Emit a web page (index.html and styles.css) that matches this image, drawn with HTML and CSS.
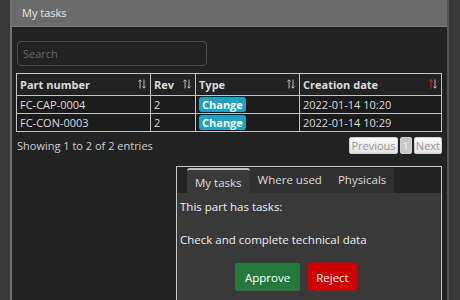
FILE: index.html
```html
<!DOCTYPE html>
<html lang="en">
  <head>
    <meta charset="UTF-8" />
    <title>My tasks</title>
    <link rel="stylesheet" href="styles.css">
  </head>
  <body>
    <div class="window">
      <div class="titlebar">My tasks</div>

      <div class="content">
        <input class="search" type="text" placeholder="Search" />

        <table class="grid">
          <thead>
            <tr>
              <th class="col-part">Part number <span class="sort"><svg width="8" height="10" viewBox="0 0 8 10"><path d="M2 9.5V1M0.5 2.5L2 0.8L3.5 2.5" stroke="#bbb" fill="none"/><path d="M6 0.5V9M4.5 7.5L6 9.2L7.5 7.5" stroke="#bbb" fill="none"/></svg></span></th>
              <th class="col-rev">Rev <span class="sort"><svg width="8" height="10" viewBox="0 0 8 10"><path d="M2 9.5V1M0.5 2.5L2 0.8L3.5 2.5" stroke="#bbb" fill="none"/><path d="M6 0.5V9M4.5 7.5L6 9.2L7.5 7.5" stroke="#bbb" fill="none"/></svg></span></th>
              <th class="col-type">Type <span class="sort"><svg width="8" height="10" viewBox="0 0 8 10"><path d="M2 9.5V1M0.5 2.5L2 0.8L3.5 2.5" stroke="#bbb" fill="none"/><path d="M6 0.5V9M4.5 7.5L6 9.2L7.5 7.5" stroke="#bbb" fill="none"/></svg></span></th>
              <th class="col-date">Creation date <span class="sort"><svg width="8" height="10" viewBox="0 0 8 10"><path d="M2 9.5V1M0.5 2.5L2 0.8L3.5 2.5" stroke="#c8161d" stroke-width="1.3" fill="none"/><path d="M6 0.5V9M4.5 7.5L6 9.2L7.5 7.5" stroke="#bbb" fill="none"/></svg></span></th>
            </tr>
          </thead>
          <tbody>
            <tr>
              <td>FC-CAP-0004</td>
              <td>2</td>
              <td><span class="badge">Change</span></td>
              <td>2022-01-14 10:20</td>
            </tr>
            <tr>
              <td>FC-CON-0003</td>
              <td>2</td>
              <td><span class="badge">Change</span></td>
              <td>2022-01-14 10:29</td>
            </tr>
          </tbody>
        </table>

        <div class="table-footer">
          <span>Showing 1 to 2 of 2 entries</span>
          <div class="pager">
            <span class="page-btn">Previous</span>
            <span class="page-btn current">1</span>
            <span class="page-btn">Next</span>
          </div>
        </div>

        <div class="detail">
          <div class="tabs">
            <div class="tab active">My tasks</div>
            <div class="tab">Where used</div>
            <div class="tab">Physicals</div>
          </div>
          <div class="tab-body">
            <p>This part has tasks:</p>
            <p>Check and complete technical data</p>
            <div class="actions">
              <button class="btn approve">Approve</button>
              <button class="btn reject">Reject</button>
            </div>
          </div>
        </div>
      </div>
    </div>
  </body>
</html>
```

FILE: styles.css
```css
body {
  margin: 0;
  background: #393939;
  font-family: "Open Sans", Arial, sans-serif;
  font-size: 11px;
  color: #dcdcdc;
  height: 300px;
  overflow: hidden;
}

.window {
  margin-left: 10px;
  width: 435px;
  height: 300px;
  background: #222;
  border-left: 2px solid #737373;
  border-right: 2px solid #555;
}

.titlebar {
  height: 26px;
  line-height: 26px;
  padding-left: 10px;
  background: #6b6b6b;
  border-bottom: 1px solid #7a7a7a;
  color: #e6e6e6;
  font-size: 11px;
}

.content {
  padding: 14px 3px 0 4px;
}

.search {
  display: block;
  margin-left: 1px;
  width: 190px;
  height: 25px;
  box-sizing: border-box;
  background: #222;
  border: 1px solid #4c4c4c;
  border-radius: 4px;
  padding: 0 5px;
  color: #ccc;
  font-family: inherit;
  font-size: 11px;
  outline: none;
}

.search::placeholder {
  color: #666;
}

.grid {
  margin-top: 7px;
  width: 426px;
  border-collapse: collapse;
  table-layout: fixed;
}

.grid th,
.grid td {
  border: 1px solid #c4c4c4;
  text-align: left;
  white-space: nowrap;
}

.grid th {
  height: 21px;
  padding: 0 4px 0 3px;
  font-weight: bold;
  color: #dcdcdc;
  background: #222;
}

.grid td {
  height: 17px;
  padding: 0 3px;
  background: #1b1b1b;
}

.col-part { width: 126px; }
.col-rev { width: 37px; }
.col-type { width: 96px; }

.sort {
  float: right;
  margin-top: 2px;
}

.sort svg {
  display: block;
}

.badge {
  display: inline-block;
  padding: 0 3px;
  line-height: 15px;
  border-radius: 3px;
  background: #1aa3c4;
  color: #fff;
  font-weight: bold;
}

.table-footer {
  display: flex;
  justify-content: space-between;
  align-items: center;
  width: 425px;
  margin-top: 5px;
  padding-left: 1px;
  color: #cfcfcf;
}

.pager {
  display: flex;
  gap: 2px;
}

.page-btn {
  padding: 0 1px;
  line-height: 15px;
  border: 1px solid #cfcfcf;
  border-radius: 2px;
  background: linear-gradient(#fafafa, #e2e2e2);
  color: #9a9a9a;
}

.page-btn.current {
  padding: 0 2px;
  background: #c8c8c8;
  color: #f2f2f2;
}

.detail {
  margin: 12px 0 0 160px;
  width: 264px;
  height: 140px;
  border: 1px solid #c8c8c8;
  border-bottom: none;
  background: #393939;
}

.tabs {
  display: flex;
  height: 26px;
  padding-left: 10px;
  background: #222;
  align-items: flex-end;
  font-size: 11.5px;
}

.tab {
  height: 25px;
  line-height: 24px;
  padding: 0 8px;
  background: #303030;
  color: #dcdcdc;
}

.tab.active {
  background: #393939;
  border-top: 2px solid #bdbdbd;
  border-radius: 3px 3px 0 0;
  height: 23px;
  line-height: 26px;
}

.tab-body {
  padding: 6px 3px;
  color: #eee;
  font-size: 11.5px;
}

.tab-body p {
  margin: 0 0 18px;
}

.actions {
  display: flex;
  gap: 8px;
  padding-left: 55px;
  margin-top: -2px;
}

.btn {
  height: 28px;
  padding: 0 10px;
  border: none;
  border-radius: 2px;
  color: #fff;
  font-family: inherit;
  font-size: 11.5px;
}

.approve {
  background: #237a3b;
}

.reject {
  padding: 0 8px;
  background: #d00000;
}
```
